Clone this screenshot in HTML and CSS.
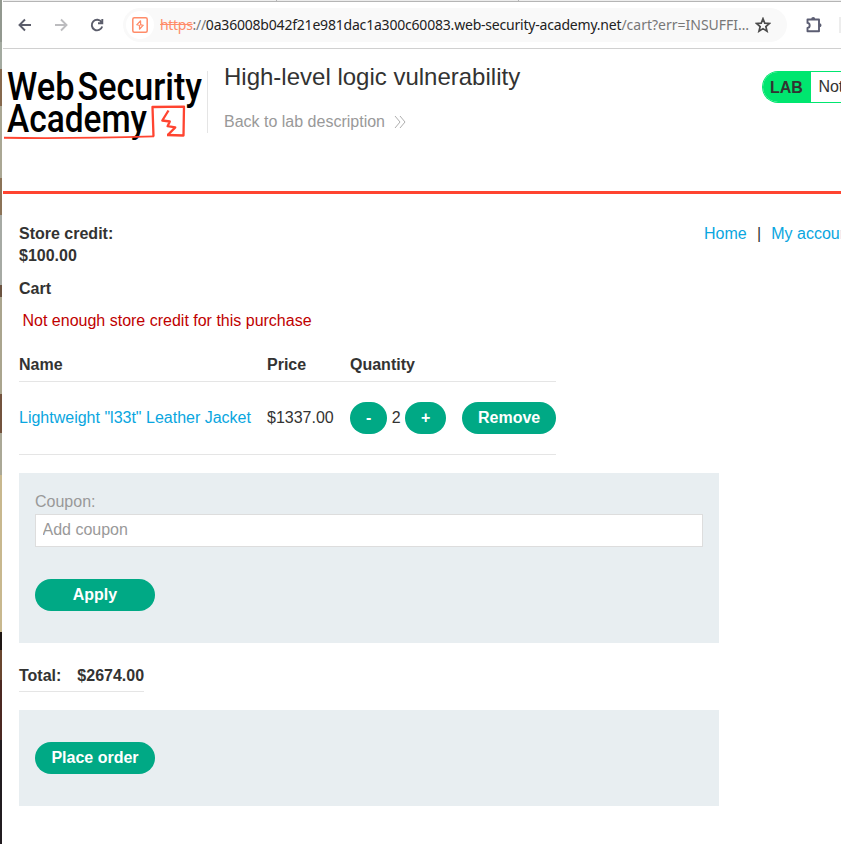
FILE: index.html
```html
<!DOCTYPE html>
<html lang="en">
<head>
<meta charset="utf-8">
<title>High-level logic vulnerability</title>
<link rel="stylesheet" href="styles.css">
</head>
<body>
<div class="wallpaper"></div>
<div class="window">
  <div class="tabs"><div class="tab-a"></div><div class="tab-b"></div></div>
  <div class="toolbar">
    <svg class="ico back" width="16" height="16" viewBox="0 0 16 16"><path d="M14 8H3M8 2.5 2.5 8 8 13.5"/></svg>
    <svg class="ico forward" width="16" height="16" viewBox="0 0 16 16"><path d="M2 8h11M8 2.5 13.500 8 8 13.500"/></svg>
    <svg class="ico reload" width="16" height="16" viewBox="0 0 16 16"><path d="M12.600 5.200A5.300 5.300 0 1 0 13.200 9.500M13.300 2v4.300H9"/></svg>
    <div class="address">
      <span class="site"><svg width="16" height="16" viewBox="0 0 16 16"><rect x=".8" y=".8" width="14.400" height="14.400" rx="1.500"/><path class="spark" d="M8.800 3.500 5 7.700l2.800.6M8.200 7.700l2.800.6-3.800 4.200M8.600 3.800v4M7.500 8.300v4"/></svg></span>
      <div class="url"><span class="scheme"><s>https</s><i>://</i></span><span class="host">0a36008b042f21e981dac1a300c60083.web-security-academy.net</span><span class="path">/cart?err=INSUFFI…</span></div>
      <svg class="star" width="16" height="16" viewBox="0 0 16 16"><path d="m8 1.700 1.750 4.450 4.750.35-3.650 3.050 1.150 4.650L8 11.650 4 14.200l1.150-4.650L1.500 6.500l4.750-.35z"/></svg>
    </div>
    <svg class="puzzle" width="18" height="18" viewBox="0 0 18 18"><path d="M2.500 3.500h11.500v11.800H2.500v-3.300c2.900-.4 2.900-4.700 0-5.100z"/><path class="nub" d="M6.200 3a2 2 0 0 1 4 0zM14.500 7.300a2 2 0 0 1 0 4z"/></svg>
    <div class="sep"></div>
  </div>
  <header class="header">
    <svg class="logo" width="200" height="76" viewBox="0 0 200 76">
      <g class="word"><text x="4" y="35" textLength="67.500" lengthAdjust="spacingAndGlyphs">Web</text>
      <text x="74.500" y="35" textLength="124.500" lengthAdjust="spacingAndGlyphs">Security</text>
      <text x="4" y="67" textLength="140" lengthAdjust="spacingAndGlyphs">Academy</text></g>
      <path class="frame" d="M150.500 71.500 149.500 42 181 41.600 180.500 70.500 164 70"/>
      <path class="line" d="M1 72.800Q70 73.800 151 71.400"/>
      <path class="bolt" d="m165.500 45.500-6.200 10 7.500 1-2.200 4.700 7.700 1.200-7.300 7.300"/>
    </svg>
    <div class="heading"><h1>High-level logic vulnerability</h1>
      <a class="backlink">Back to lab description<svg width="12" height="12" viewBox="0 0 12 12"><path d="m1 0 5 6-5 6M6 0l5 6-5 6"/></svg></a></div>
    <div class="status"><b>LAB</b><span>Not solved</span></div>
  </header>
  <main>
    <nav><a>Home</a><i>|</i><a>My account</a></nav>
    <div class="credit">Store credit:<br>$100.00</div>
    <h2>Cart</h2>
    <p class="warning">Not enough store credit for this purchase</p>
    <div class="cart">
      <b>Name</b><b>Price</b><b>Quantity</b><b></b>
      <div><a>Lightweight "l33t" Leather Jacket</a></div><div>$1337.00</div>
      <div><button>-</button><span class="count">2</span><button>+</button></div><div><button>Remove</button></div>
    </div>
    <form class="panel coupon"><label>Coupon:</label><input type="text" placeholder="Add coupon"><button type="button" class="wide">Apply</button></form>
    <div class="total"><span>Total:</span><span>$2674.00</span></div>
    <form class="panel order"><button type="button" class="wide">Place order</button></form>
  </main>
</div>
</body>
</html>
```
FILE: styles.css
```css
* { box-sizing: border-box; }
body { margin: 0; height: 844px; display: flex; overflow: hidden; background: #fff; color: #333332; font: 16px/22px "Liberation Sans", Arial, sans-serif; }
i { font-style: normal; }
.wallpaper { flex: 0 0 2px; background: linear-gradient(#92988f 0 42px, #a3aaa0 42px 69px, #86694e 69px 106px, #aaa794 106px 178px, #8b7357 178px 215px, #a6aaa4 215px 285px, #6b5340 285px 297px, #aaa58e 297px 394px, #73533d 394px 433px, #aaa896 433px 475px, #c8b88e 475px 632px, #1e1714 632px 650px, #69462f 650px 680px, #4b2821 680px 740px, #211c20 740px); }
.window { flex: 1; min-width: 0; padding-left: 1px; overflow: hidden; }
.tabs { height: 2px; background: #ececec; border-bottom: 1px solid #b5b5b5; display: flex; justify-content: space-between; }
.tab-a { width: 274px; background: #eee; border-right: 1px solid #b5b5b5; }
.tab-b { width: 323px; background: #eee; border-left: 1px solid #b5b5b5; }
.toolbar { height: 47px; border-bottom: 1px solid #d0d0d0; display: flex; align-items: center; padding-left: 14px; }
.ico { flex: none; fill: none; stroke: #5b5d6b; stroke-width: 1.9; margin-right: 20px; }
.forward { stroke: #bcbcbf; }
.reload { margin-right: 18px; }
.address { flex: none; width: 664px; height: 34px; border-radius: 17px; background: #f9f9f9; display: flex; align-items: center; padding-left: 3px; }
.site { flex: none; width: 28px; height: 28px; border-radius: 50%; background: #fff; display: flex; align-items: center; justify-content: center; margin-right: 6px; }
.site svg { fill: none; stroke: #ff8c69; stroke-width: 1.500; }
.site .spark { stroke-width: 1.200; }
.url { flex: none; width: 588px; display: flex; white-space: nowrap; font: 14px/22px "Noto Sans", sans-serif; letter-spacing: -.2px; color: #777; }
.scheme { letter-spacing: -.3px; }
.scheme s { color: #ff8c69; }
.host { color: #222; }
.path { letter-spacing: 0; }
.star { flex: none; margin-left: 7px; fill: none; stroke: #4b4b4b; stroke-width: 1.700; }
.puzzle { flex: none; margin-left: 18px; fill: none; stroke: #5b5d72; stroke-width: 1.900; stroke-linejoin: round; }
.puzzle .nub { fill: #5b5d72; stroke: none; }
.sep { width: 3px; height: 16px; margin-left: 16px; background: #ededed; }
.header { height: 145px; border-bottom: 3px solid #ff4430; display: flex; align-items: flex-start; padding-top: 15px; }
.logo { flex: none; margin: 1px 4px 0 0; overflow: visible; }
.word { font: 500 38px Roboto, sans-serif; fill: #000; }
.frame, .line, .bolt { fill: none; stroke: #ff4430; stroke-width: 2.300; stroke-linejoin: round; }
.line { stroke-width: 1.900; }
.heading { flex: none; border-left: 1px solid #e5e5e5; padding-left: 16px; height: 62px; margin-top: 7px; }
h1 { margin: -8px 0 0; font-size: 24px; line-height: 28px; font-weight: 400; }
.backlink { display: flex; align-items: center; margin-top: 20px; color: #999; }
.backlink svg { margin-left: 9px; fill: none; stroke: #999; stroke-width: .8; }
.status { flex: none; margin: 7px 0 0 auto; display: flex; width: 79px; height: 32px; line-height: 32px; border: 1px solid #00e66f; border-right: 0; border-radius: 16px 0 0 16px; overflow: hidden; white-space: nowrap; }
.status b { background: #00e66f; padding: 0 8px 0 7px; flex: none; line-height: 32px; }
.status span { padding-left: 7.500px; line-height: 30px; }
main { padding: 29px 0 0 16px; position: relative; }
nav { position: absolute; left: 701px; top: 29px; display: flex; gap: 10.200px; white-space: nowrap; }
a { color: #09a6e0; }
.credit, h2, .total { font-weight: 700; }
h2 { font-size: 16px; margin: 11px 0 10px; line-height: 22px; }
.warning { margin: 0 0 22px 3.500px; color: #c00000; }
.cart { width: 537px; display: grid; grid-template-columns: 248px 83px 112px 94px; }
.cart > * { border-bottom: 1px solid #e5e5e5; white-space: nowrap; }
.cart > b { height: 28px; }
.cart > div { height: 73px; display: flex; align-items: center; }
button { height: 32px; padding: 0 16px; border: 0; border-radius: 16px; background: #00a985; color: #fff; font: 700 16px/32px "Liberation Sans", Arial, sans-serif; }
.count { padding: 0 4.400px; }
.panel { width: 700px; background: #e8eef1; padding: 18px 16px 32px; margin: 18px 0 0; }
.panel label { display: block; color: #999; }
.panel input { display: block; width: 668px; height: 33px; padding: 0 6.500px 2px; border: 1px solid #ddd; margin: 1px 0 32px; font: 16px "Liberation Sans", Arial, sans-serif; }
input::placeholder { color: #999; }
.wide { display: block; width: 120px; padding: 0; }
.total { display: flex; gap: 16px; width: 125px; height: 27px; margin-top: 22px; border-bottom: 1px solid #e5e5e5; }
.order { padding-top: 32px; }
```
